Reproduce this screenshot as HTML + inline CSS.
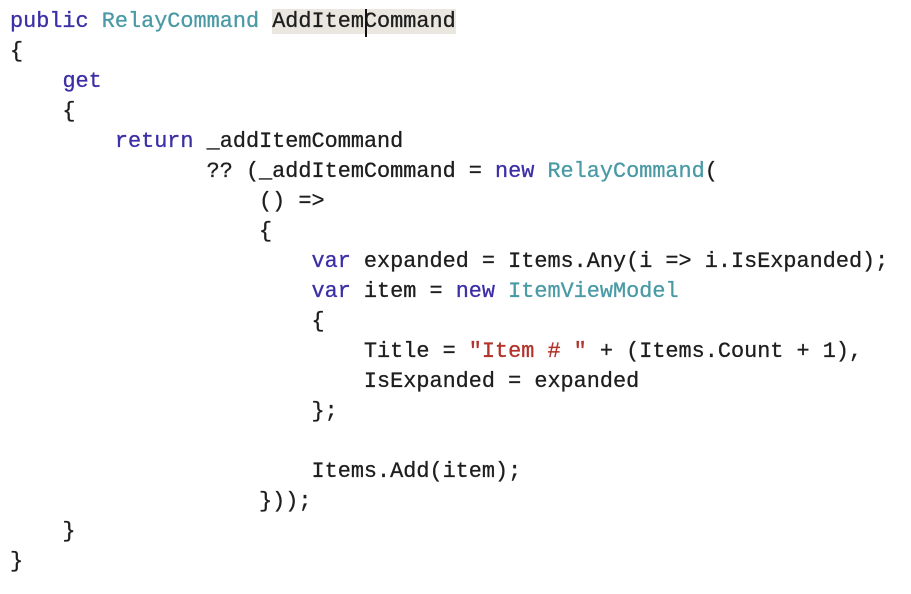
<!DOCTYPE html>
<html><head><style>
html,body{margin:0;padding:0;background:#fff;width:911px;height:594px;overflow:hidden}
pre{margin:0;position:absolute;left:10px;top:7px;font-family:"Liberation Mono","DejaVu Sans Mono",monospace;font-size:21.85px;line-height:30px;color:#1e1e1e;letter-spacing:0;-webkit-text-stroke:0.3px #1e1e1e}
.k{color:#3b2fa6;-webkit-text-stroke-color:#3b2fa6}.t{color:#4a9aa6;-webkit-text-stroke-color:#4a9aa6}.s{color:#b2322c;-webkit-text-stroke-color:#b2322c}
.hl{background:#e9e7df}
.top{position:absolute;left:10px;top:-15px;font-family:"Liberation Sans",sans-serif;font-size:14px;color:#c8c8c8}
.cur{position:absolute;left:365px;top:9px;width:2px;height:28px;background:#111}
</style></head><body>
<div class="top">3 references</div>
<pre><span class="k">public</span> <span class="t">RelayCommand</span> <span class="hl">AddItemCommand</span>
{
    <span class="k">get</span>
    {
        <span class="k">return</span> _addItemCommand
               ?? (_addItemCommand = <span class="k">new</span> <span class="t">RelayCommand</span>(
                   () =&gt;
                   {
                       <span class="k">var</span> expanded = Items.Any(i =&gt; i.IsExpanded);
                       <span class="k">var</span> item = <span class="k">new</span> <span class="t">ItemViewModel</span>
                       {
                           Title = <span class="s">"Item # "</span> + (Items.Count + 1),
                           IsExpanded = expanded
                       };

                       Items.Add(item);
                   }));
    }
}</pre>
<div class="cur"></div>
</body></html>
